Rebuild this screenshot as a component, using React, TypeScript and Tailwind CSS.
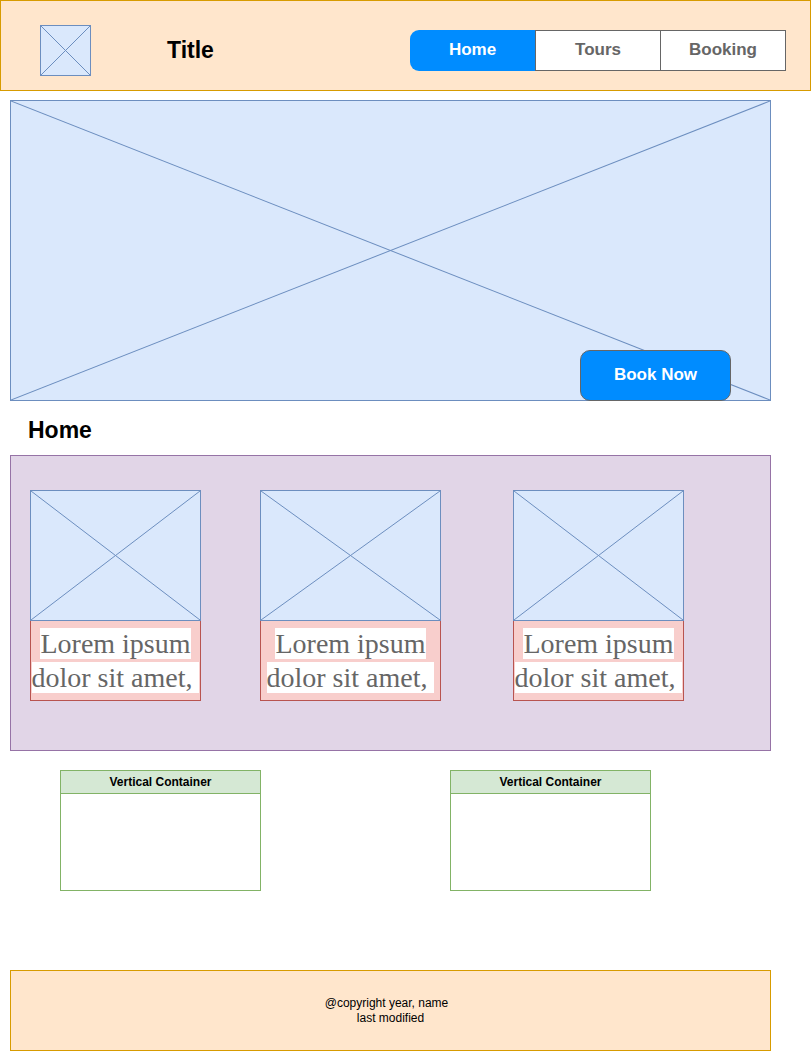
import React from "react";

function Ph({ className }: { className: string }) {
  return (
    <div className={`relative border border-[#6c8ebf] bg-[#dae8fc] ${className}`}>
      <svg className="absolute inset-0 h-full w-full" viewBox="0 0 100 100" preserveAspectRatio="none">
        <line x1="0" y1="0" x2="100" y2="100" stroke="#6c8ebf" strokeWidth="1" vectorEffect="non-scaling-stroke" />
        <line x1="100" y1="0" x2="0" y2="100" stroke="#6c8ebf" strokeWidth="1" vectorEffect="non-scaling-stroke" />
      </svg>
    </div>
  );
}

function Card({ w, className = "" }: { w: string; className?: string }) {
  return (
    <div className={`flex flex-col ${w} ${className}`}>
      <Ph className="h-[131px] w-full" />
      <div className="-mt-px h-[81px] w-full overflow-hidden whitespace-nowrap border border-[#b85450] bg-[#f8cecc] pt-[6px] text-center text-[28px] leading-[34px] text-[#666666] [font-family:'Liberation_Serif',serif]">
        <span className="bg-white">Lorem ipsum</span>
        <br />
        <span className="bg-white">{"dolor sit amet,\u00a0"}</span>
      </div>
    </div>
  );
}

function VContainer({ className = "" }: { className?: string }) {
  return (
    <div className={`flex h-[121px] w-[201px] flex-col border border-[#82b366] bg-white ${className}`}>
      <div className="flex h-[23px] items-center justify-center border-b border-[#82b366] bg-[#d5e8d4] text-[12px] font-bold text-black">
        Vertical Container
      </div>
    </div>
  );
}

export default function App() {
  return (
    <div className="w-[811px] bg-white [font-family:'Liberation_Sans',Arial,sans-serif]">
      {/* Header */}
      <div className="flex h-[91px] w-[811px] items-start border border-[#d79b00] bg-[#ffe6cc] pl-[39px] pt-[24px] pr-[24px]">
        <Ph className="h-[51px] w-[51px]" />
        <div className="ml-[76px] flex h-[51px] items-center text-[23px] font-bold text-black">Title</div>
        <div className="ml-auto mt-[5px] flex h-[41px] text-[17px] font-bold">
          <div className="flex w-[125px] items-center justify-center rounded-l-[9px] bg-[#008cff] pb-[2px] text-white">Home</div>
          <div className="flex w-[126px] items-center justify-center border border-[#666666] bg-white pb-[2px] text-[#666666]">Tours</div>
          <div className="flex w-[125px] items-center justify-center border-y border-r border-[#666666] bg-white pb-[2px] text-[#666666]">Booking</div>
        </div>
      </div>

      {/* Hero */}
      <div className="relative ml-[10px] mt-[9px] h-[301px] w-[761px]">
        <Ph className="h-full w-full" />
        <div className="absolute left-[570px] top-[250px] flex h-[51px] w-[151px] items-center justify-center rounded-[10px] border border-[#666666] bg-[#008cff] pb-[2px] text-[17px] font-bold text-white">
          Book Now
        </div>
      </div>

      {/* Heading */}
      <div className="flex h-[54px] items-center pl-[28px] pt-[4px] text-[23px] font-bold text-black">Home</div>

      {/* Purple section */}
      <div className="ml-[10px] flex h-[296px] w-[761px] items-start border border-[#9673a6] bg-[#e1d5e7] pl-[19px] pt-[34px]">
        <Card w="w-[171px]" />
        <Card w="w-[181px]" className="ml-[59px]" />
        <Card w="w-[171px]" className="ml-[72px]" />
      </div>

      {/* Vertical containers */}
      <div className="ml-[60px] mt-[19px] flex">
        <VContainer />
        <VContainer className="ml-[189px]" />
      </div>

      {/* Footer */}
      <div className="ml-[10px] mt-[79px] flex h-[81px] w-[761px] flex-col items-center justify-center border border-[#d79b00] bg-[#ffe6cc] text-center text-[12px] leading-[15px] text-black">
        <div className="pr-[8px]">@copyright year, name</div>
        <div>last modified</div>
      </div>
    </div>
  );
}
